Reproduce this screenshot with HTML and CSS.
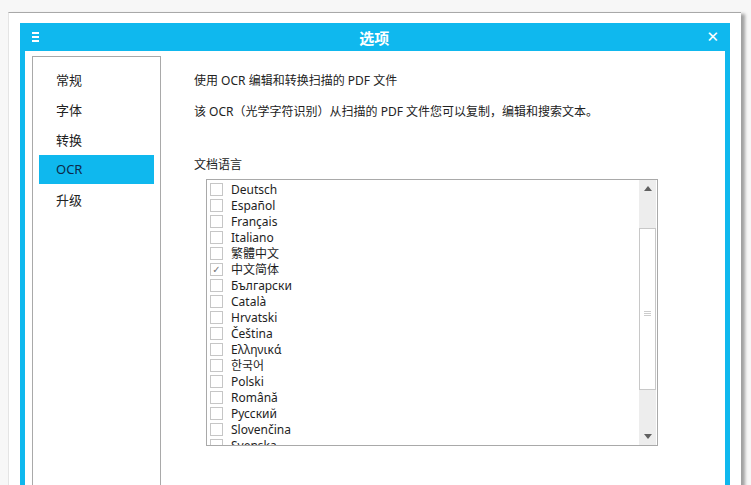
FILE: index.html
```html
<!DOCTYPE html>
<html>
<head>
    <meta charset="utf-8">
    <link rel="stylesheet" href="styles.css">
    <title>选项</title>
</head>
<body>
    <div class="window">
        <div class="frame">
            <div class="titlebar">
                <span class="menuIcon"><i></i><i></i><i></i></span>
                <span class="title">选项</span>
                <span class="closeIcon">✕</span>
            </div>

            <div class="content">
                <div class="sidebar">
                    <ul>
                        <li>常规</li>
                        <li>字体</li>
                        <li>转换</li>
                        <li class="active">OCR</li>
                        <li>升级</li>
                    </ul>
                </div>

                <div class="main">
                    <p class="line1">使用 OCR 编辑和转换扫描的 PDF 文件</p>
                    <p class="line2">该 OCR（光学字符识别）从扫描的 PDF 文件您可以复制，编辑和搜索文本。</p>
                    <p class="label">文档语言</p>

                    <div class="listBox">
                        <ul class="langs">
                            <li><span class="check"></span>Deutsch</li>
                            <li><span class="check"></span>Español</li>
                            <li><span class="check"></span>Français</li>
                            <li><span class="check"></span>Italiano</li>
                            <li><span class="check"></span>繁體中文</li>
                            <li><span class="check checked">✓</span>中文简体</li>
                            <li><span class="check"></span>Български</li>
                            <li><span class="check"></span>Català</li>
                            <li><span class="check"></span>Hrvatski</li>
                            <li><span class="check"></span>Čeština</li>
                            <li><span class="check"></span>Ελληνικά</li>
                            <li><span class="check"></span>한국어</li>
                            <li><span class="check"></span>Polski</li>
                            <li><span class="check"></span>Română</li>
                            <li><span class="check"></span>Русский</li>
                            <li><span class="check"></span>Slovenčina</li>
                            <li><span class="check"></span>Svenska</li>
                        </ul>
                        <div class="scrollbar">
                            <div class="arrow up"></div>
                            <div class="track top"></div>
                            <div class="thumb"><span class="grip"></span></div>
                            <div class="track bottom"></div>
                            <div class="arrow down"></div>
                        </div>
                    </div>
                </div>
            </div>
        </div>
    </div>
</body>
</html>
```

FILE: styles.css
```css
* {
    box-sizing: border-box;
}

html, body {
    margin: 0;
    height: 100%;
    overflow: hidden;
}

body {
    background-color: #f7f7f7;
    font-family: "Noto Sans", "Noto Sans CJK SC", sans-serif;
    color: #222222;
    padding: 12px 0 0 8px;
}

.window {
    width: 733px;
    height: 490px;
    background-color: #ffffff;
    border-top: 1px solid #a8a8a8;
    border-left: 1px solid #e4e4e4;
    box-shadow: 4px 2px 3px rgba(0,0,0,0.35);
    padding: 10px 10px 0 11px;
}

.frame {
    width: 710px;
    height: 100%;
    background-color: #0fb8ee;
    padding: 0 5px;
    display: flex;
    flex-direction: column;
}

.titlebar {
    height: 28px;
    display: flex;
    align-items: center;
    color: #ffffff;
}

.menuIcon {
    display: flex;
    flex-direction: column;
    gap: 2px;
    margin-left: 7px;
    width: 7px;
}

    .menuIcon i {
        display: block;
        height: 2px;
        background-color: #ffffff;
    }

.title {
    flex: 1;
    text-align: center;
    font-size: 15px;
    font-weight: bold;
    font-family: "Noto Sans CJK SC", sans-serif;
    margin-left: 3px;
}

.closeIcon {
    font-size: 15px;
    font-weight: bold;
    margin-right: 6px;
    font-family: "DejaVu Sans", sans-serif;
}

.content {
    flex: 1;
    background-color: #ffffff;
    display: flex;
    padding: 5px 0 0 7px;
}

.sidebar {
    width: 129px;
    border: 1px solid #a9a9a9;
    border-bottom: none;
    padding: 8px 6px 0 6px;
}

    .sidebar ul {
        list-style-type: none;
        margin: 0;
        padding: 0;
    }

    .sidebar li {
        height: 30px;
        line-height: 30px;
        padding-left: 17px;
        font-size: 13px;
        font-family: "Noto Sans CJK SC", sans-serif;
    }

    .sidebar li.active {
        background-color: #0fb8ee;
        color: #0d2a4a;
        font-family: "Noto Sans", sans-serif;
        height: 29px;
        line-height: 29px;
        margin-bottom: 1px;
    }

.main {
    padding: 16px 0 0 33px;
    font-size: 12px;
}

    .main p {
        margin: 0;
        line-height: 17px;
    }

.line2 {
    margin-top: 14px !important;
}

.label {
    margin-top: 36px !important;
}

.listBox {
    margin: 6px 0 0 12px;
    width: 452px;
    height: 267px;
    border: 1px solid #a9a9a9;
    display: flex;
    overflow: hidden;
}

.langs {
    flex: 1;
    list-style-type: none;
    margin: 0;
    padding: 1px 0 0 3px;
    overflow: hidden;
    font-size: 12px;
}

    .langs li {
        height: 16px;
        display: flex;
        align-items: center;
        white-space: nowrap;
        color: #1e1e1e;
    }

.check {
    width: 13px;
    height: 13px;
    border: 1px solid #c6c6c6;
    margin-right: 8px;
    font-size: 10px;
    line-height: 11px;
    text-align: center;
    color: #777777;
    font-weight: bold;
    font-family: "DejaVu Sans", sans-serif;
}

.scrollbar {
    width: 17px;
    margin-right: 1px;
    display: flex;
    flex-direction: column;
    background-color: #ededed;
}

.arrow {
    height: 17px;
    display: flex;
    align-items: center;
    justify-content: center;
}

    .arrow::after {
        content: "";
        border-left: 4px solid transparent;
        border-right: 4px solid transparent;
    }

    .arrow.up::after {
        border-bottom: 5px solid #606060;
    }

    .arrow.down::after {
        border-top: 5px solid #606060;
    }

.track.top {
    height: 31px;
}

.thumb {
    height: 162px;
    background-color: #ffffff;
    border: 1px solid #c8c8c8;
    display: flex;
    align-items: center;
    justify-content: center;
}

.grip {
    width: 7px;
    height: 5px;
    border-top: 1px solid #cccccc;
    border-bottom: 1px solid #cccccc;
    position: relative;
    margin-top: 8px;
}

    .grip::after {
        content: "";
        position: absolute;
        left: 0;
        right: 0;
        top: 1px;
        border-top: 1px solid #cccccc;
    }

.track.bottom {
    flex: 1;
}
```
